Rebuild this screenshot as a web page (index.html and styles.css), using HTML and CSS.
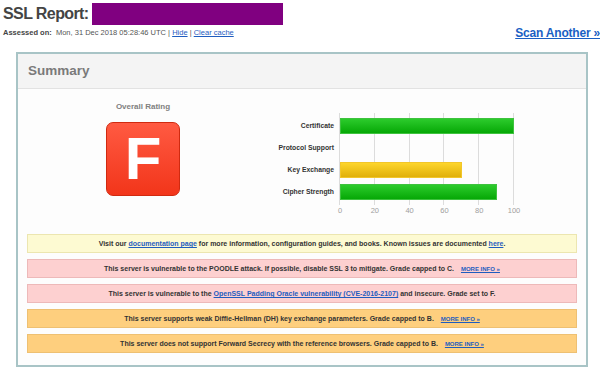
FILE: index.html
```html
<!DOCTYPE HTML>
<html lang="en">
  <head>
    <title>SSL Report</title>
    <meta charset="utf-8" />
    <link rel="stylesheet" href="styles.css">
  </head>
  <body>
    <div class='page-head'>
      <div class='report'>
        <h1 class='title'>SSL Report: <span class='host'></span></h1>
        <div class='assessed'><b>Assessed on:</b>&nbsp; Mon, 31 Dec 2018 05:28:46 UTC | <a href='#'>Hide</a> | <a href='#'>Clear cache</a></div>
      </div>
      <a class='scan' href='#'>Scan Another &raquo;</a>
    </div>

    <div class='summary'>
      <div class='summary-head'>Summary</div>
      <div class='summary-body'>
        <div class='rating'>
          <div class='rating-label'>Overall Rating</div>
          <div class='grade'>F</div>
        </div>
        <div class='chart'>
          <div class='chart-labels'>
            <div class='chart-label'>Certificate</div>
            <div class='chart-label'>Protocol Support</div>
            <div class='chart-label'>Key Exchange</div>
            <div class='chart-label'>Cipher Strength</div>
          </div>
          <div class='chart-plot'>
            <div class='plot'>
              <div class='gridline' style='left: 0%'></div>
              <div class='gridline' style='left: 20%'></div>
              <div class='gridline' style='left: 40%'></div>
              <div class='gridline' style='left: 60%'></div>
              <div class='gridline' style='left: 80%'></div>
              <div class='gridline' style='left: 100%'></div>
              <div class='bar-row'><div class='bar green' style='width: 100%'></div></div>
              <div class='bar-row'></div>
              <div class='bar-row'><div class='bar yellow' style='width: 70%'></div></div>
              <div class='bar-row'><div class='bar green' style='width: 90%'></div></div>
            </div>
            <div class='axis'>
              <span class='tick' style='left: 0%'>0</span>
              <span class='tick' style='left: 20%'>20</span>
              <span class='tick' style='left: 40%'>40</span>
              <span class='tick' style='left: 60%'>60</span>
              <span class='tick' style='left: 80%'>80</span>
              <span class='tick' style='left: 100%'>100</span>
            </div>
          </div>
        </div>
      </div>

      <div class='notices'>
        <div class='notice info'>Visit our <a href='#'>documentation page</a> for more information, configuration guides, and books. Known issues are documented <a href='#'>here</a>.</div>
        <div class='notice error'>This server is vulnerable to the POODLE attack. If possible, disable SSL 3 to mitigate. Grade capped to C. <a class='more' href='#'>MORE INFO &raquo;</a></div>
        <div class='notice error'>This server is vulnerable to the <a href='#'>OpenSSL Padding Oracle vulnerability (CVE-2016-2107)</a> and insecure. Grade set to F.</div>
        <div class='notice warning'>This server supports weak Diffie-Hellman (DH) key exchange parameters. Grade capped to B. <a class='more' href='#'>MORE INFO &raquo;</a></div>
        <div class='notice warning'>This server does not support Forward Secrecy with the reference browsers. Grade capped to B. <a class='more' href='#'>MORE INFO &raquo;</a></div>
      </div>
    </div>
  </body>
</html>
```

FILE: styles.css
```css
body {
  box-sizing: border-box;
  margin: 0;
  padding: 0 0 0 3px;
  width: 600px;
  height: 372px;
  overflow: hidden;
  font-family: "Liberation Sans", Arial, sans-serif;
  color: #333;
  background-color: #ffffff;
}

a {
  color: #1f5dbf;
}

.page-head {
  display: flex;
  justify-content: space-between;
  height: 49px;
  margin-top: 3px;
}

.title {
  margin: 0;
  height: 22px;
  font-size: 16px;
  line-height: 22px;
  letter-spacing: -0.6px;
  color: #444;
}

.host {
  display: inline-block;
  vertical-align: top;
  width: 191px;
  height: 22px;
  background-color: #800080;
}

.assessed {
  margin-top: 3px;
  font-size: 7.5px;
  line-height: 10px;
  color: #555;
}

.assessed b {
  color: #444;
}

.scan {
  margin-top: 23px;
  font-size: 12px;
  line-height: 14px;
  letter-spacing: -0.2px;
  font-weight: bold;
  color: #1a5fc4;
}

.summary {
  width: 568px;
  margin-left: 13px;
  border: 2px solid #a8c4c6;
  background-color: #fdfdfd;
  padding-bottom: 12px;
}

.summary-head {
  height: 34px;
  padding-left: 10px;
  line-height: 34px;
  font-size: 13.5px;
  font-weight: bold;
  color: #7a7a7a;
  background-color: #f4f4f4;
  border-bottom: 1px solid #e2e2e2;
}

.summary-body {
  display: flex;
  height: 145px;
}

.rating {
  display: flex;
  flex-direction: column;
  align-items: center;
  width: 250px;
}

.rating-label {
  margin-top: 13px;
  font-size: 8px;
  line-height: 10px;
  font-weight: bold;
  color: #808080;
}

.grade {
  box-sizing: border-box;
  width: 74px;
  height: 74px;
  margin-top: 10px;
  border: 1px solid #d02a10;
  border-radius: 7px;
  background: linear-gradient(#ff5a42, #f2351a);
  color: #ffffff;
  font-size: 60px;
  font-weight: bold;
  line-height: 72px;
  text-align: center;
}

.chart {
  display: flex;
  margin-top: 24px;
}

.chart-labels {
  width: 66px;
  padding: 2px 6px 0 0;
  text-align: right;
}

.chart-label {
  height: 22px;
  line-height: 22px;
  font-size: 6.8px;
  font-weight: bold;
  color: #333;
  white-space: nowrap;
}

.chart-plot {
  width: 174px;
}

.plot {
  position: relative;
  padding: 2px 0;
}

.gridline {
  position: absolute;
  top: 0;
  bottom: 0;
  width: 1px;
  margin-left: -1px;
  background-color: #dcdcdc;
}

.bar-row {
  position: relative;
  display: flex;
  align-items: center;
  height: 22px;
}

.bar {
  box-sizing: border-box;
  height: 16px;
}

.bar.green {
  background: linear-gradient(#2ccb2c, #06a806);
  border: 1px solid #3ec23e;
}

.bar.yellow {
  background: linear-gradient(#fdd52c, #e0b00a);
  border: 1px solid #f2c62a;
}

.axis {
  position: relative;
  height: 12px;
}

.tick {
  position: absolute;
  top: 1px;
  transform: translateX(-50%);
  font-size: 7.5px;
  line-height: 10px;
  color: #a0a0a0;
}

.notices {
  display: flex;
  flex-direction: column;
  gap: 6px;
  margin: 0 9px;
}

.notice {
  box-sizing: border-box;
  height: 19px;
  line-height: 17px;
  font-size: 7px;
  font-weight: bold;
  text-align: center;
  color: #333;
  white-space: nowrap;
}

.notice.info {
  background-color: #fdfad2;
  border: 1px solid #ece6b0;
}

.notice.error {
  background-color: #fdd0d0;
  border: 1px solid #edb9b9;
}

.notice.warning {
  background-color: #fecf7e;
  border: 1px solid #eec072;
}

.more {
  margin-left: 5px;
  font-size: 6px;
}
```
